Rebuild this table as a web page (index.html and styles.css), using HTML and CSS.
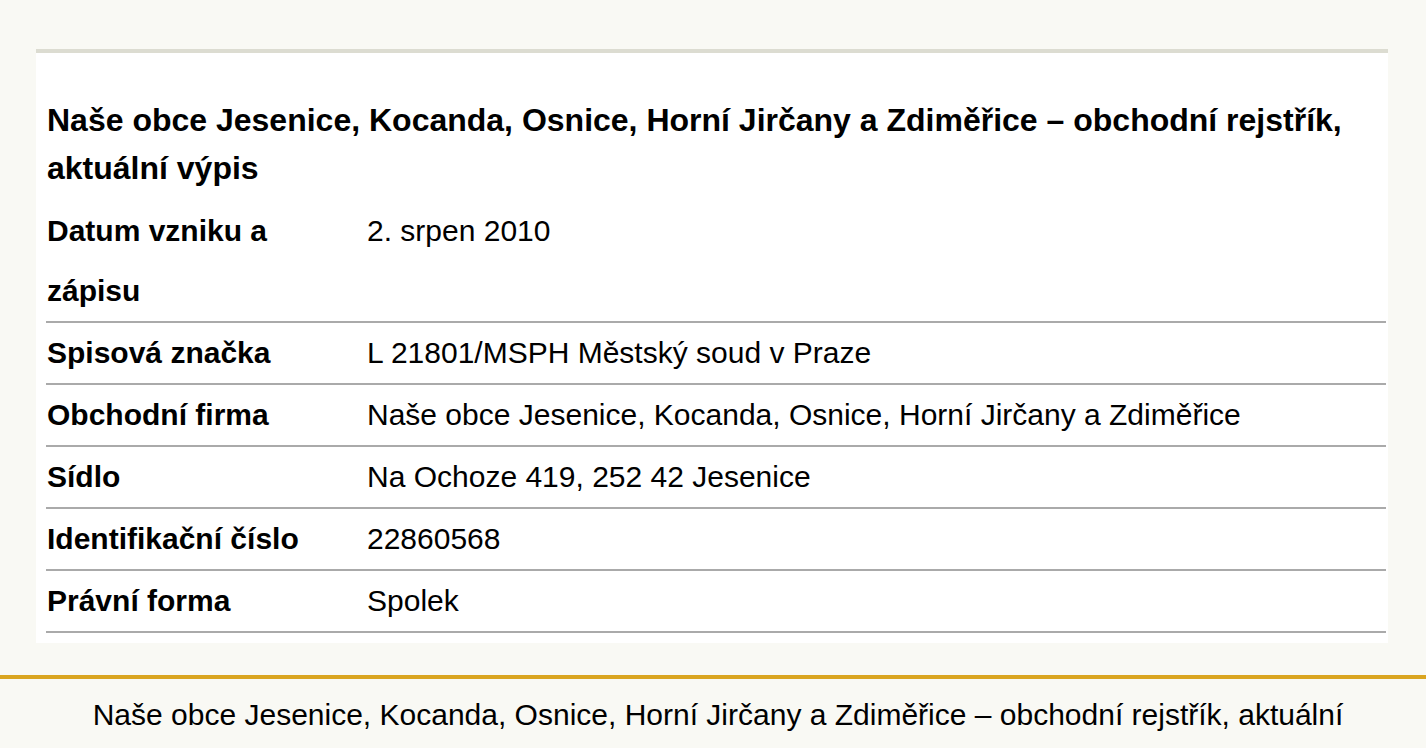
FILE: index.html
```html
<!DOCTYPE html>
<html lang="cs">
<head>
  <meta charset="UTF-8">
  <meta name="viewport" content="width=device-width, initial-scale=1.0">
  <title>Naše obce – obchodní rejstřík</title>
  <link rel="stylesheet" href="styles.css">
</head>
<body>
  <div class="page">
    <!-- Registry card -->
    <div class="card">
      <h2 class="card-title">Naše obce Jesenice, Kocanda, Osnice, Horní Jirčany a Zdiměřice – obchodní rejstřík, aktuální výpis</h2>
      <table class="registry">
        <tr>
          <th>Datum vzniku a zápisu</th>
          <td>2. srpen 2010</td>
        </tr>
        <tr>
          <th>Spisová značka</th>
          <td>L 21801/MSPH Městský soud v Praze</td>
        </tr>
        <tr>
          <th>Obchodní firma</th>
          <td>Naše obce Jesenice, Kocanda, Osnice, Horní Jirčany a Zdiměřice</td>
        </tr>
        <tr>
          <th>Sídlo</th>
          <td>Na Ochoze 419, 252 42 Jesenice</td>
        </tr>
        <tr>
          <th>Identifikační číslo</th>
          <td>22860568</td>
        </tr>
        <tr>
          <th>Právní forma</th>
          <td>Spolek</td>
        </tr>
      </table>
    </div>
  </div>

  <!-- Footer -->
  <div class="footer">
    <p class="footer-text">Naše obce Jesenice, Kocanda, Osnice, Horní Jirčany a Zdiměřice – obchodní rejstřík, aktuální výpis</p>
  </div>
</body>
</html>
```

FILE: styles.css
```css
  html, body {
    margin: 0;
    padding: 0;
  }

  body {
    font-family: "Liberation Sans", Arial, sans-serif;
    background-color: #f9f9f4;
    color: #000;
  }

  .page {
    padding: 49px 38px 0 36px;
  }

  .card {
    background-color: #fff;
    border-top: 4px solid #dcdcd1;
    padding: 10px 2px 10px 10px;
  }

  .card-title {
    font-size: 32px;
    line-height: 48px;
    font-weight: bold;
    margin: 33px 0 9px 1px;
  }

  .registry {
    width: 100%;
    border-collapse: collapse;
    font-size: 30px;
    line-height: 60px;
  }

  .registry th,
  .registry td {
    text-align: left;
    vertical-align: top;
    padding: 0 0 0 1px;
    border-bottom: 2px solid #aaa;
  }

  .registry th {
    width: 319px;
    font-weight: bold;
  }

  .footer {
    margin-top: 32px;
    border-top: 4px solid #daa520;
    padding: 6px 50px 0 60px;
    text-align: center;
  }

  .footer-text {
    margin: 0;
    font-size: 30px;
    line-height: 60px;
  }
```
